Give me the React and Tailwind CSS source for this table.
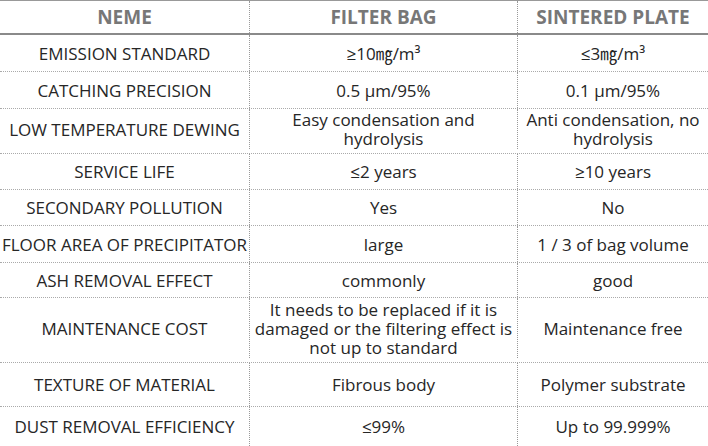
import React from 'react';

const rows = [
  { name: 'EMISSION STANDARD', bag: '≥10㎎/m³', plate: '≤3㎎/m³', h: 'h-[37px]' },
  { name: 'CATCHING PRECISION', bag: '0.5 μm/95%', plate: '0.1 μm/95%', h: 'h-[37px]' },
  {
    name: 'LOW TEMPERATURE DEWING',
    bag: 'Easy condensation and hydrolysis',
    plate: 'Anti condensation, no hydrolysis',
    h: 'h-[45px] pb-[4px]',
  },
  { name: 'SERVICE LIFE', bag: '≤2 years', plate: '≥10 years', h: 'h-[36px]' },
  { name: 'SECONDARY POLLUTION', bag: 'Yes', plate: 'No', h: 'h-[36px]' },
  { name: 'FLOOR AREA OF PRECIPITATOR', bag: 'large', plate: '1 / 3 of bag volume', h: 'h-[37px]' },
  { name: 'ASH REMOVAL EFFECT', bag: 'commonly', plate: 'good', h: 'h-[35px]' },
  {
    name: 'MAINTENANCE COST',
    bag: 'It needs to be replaced if it is damaged or the filtering effect is not up to standard',
    plate: 'Maintenance free',
    h: 'h-[65px] pb-[4px]',
  },
  { name: 'TEXTURE OF MATERIAL', bag: 'Fibrous body', plate: 'Polymer substrate', h: 'h-[44px]' },
  { name: 'DUST REMOVAL EFFICIENCY', bag: '≤99%', plate: 'Up to 99.999%', h: 'h-[40px]' },
];

export default function App() {
  return (
    <div
      className="w-[708px] h-[446px] overflow-hidden bg-white text-[#262626] text-[17px] leading-[19px]"
      style={{ fontFamily: '"Open Sans", "Noto Sans CJK SC", sans-serif' }}
    >
      {/* Header */}
      <div className="grid grid-cols-[250px_268px_190px] h-[35px] border-t border-[#999] border-b-2 border-b-[#8a8a8a] text-[#777] font-bold text-[19px]">
        <div className="flex items-center justify-center border-r border-dotted border-r-[#999] whitespace-nowrap">NEME</div>
        <div className="flex items-center justify-center border-r border-dotted border-r-[#999] whitespace-nowrap">FILTER BAG</div>
        <div className="flex items-center justify-center whitespace-nowrap">SINTERED PLATE</div>
      </div>

      {rows.map((r) => (
        <div
          key={r.name}
          className={`grid grid-cols-[250px_268px_190px] border-b border-dotted border-b-[#aaa] ${r.h}`}
        >
          <div className="flex items-center justify-center text-center border-r border-dotted border-r-[#999] whitespace-nowrap">
            {r.name}
          </div>
          <div className="flex items-center justify-center text-center border-r border-dotted border-r-[#999] px-1">
            {r.bag}
          </div>
          <div className="flex items-center justify-center text-center px-1">{r.plate}</div>
        </div>
      ))}
    </div>
  );
}
